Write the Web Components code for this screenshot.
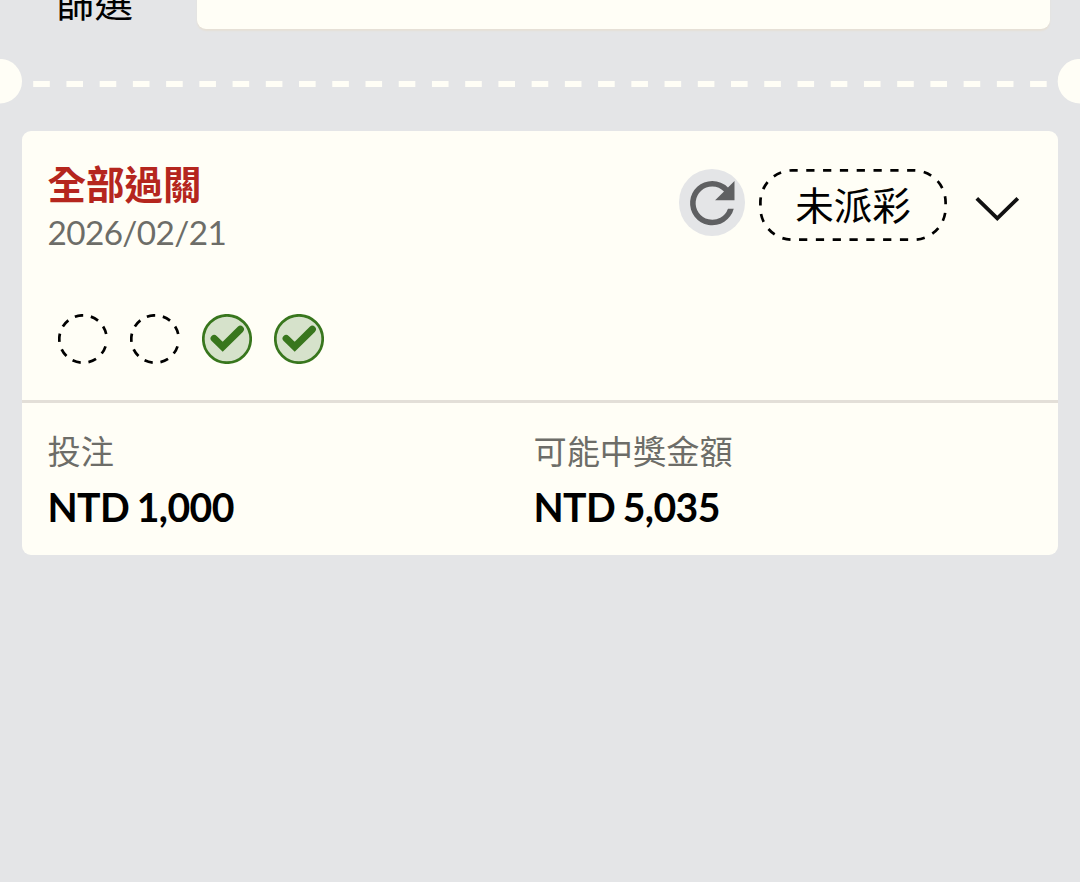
<!DOCTYPE html>
<html lang="zh-Hant">
<head>
<meta charset="utf-8">
<title>投注紀錄</title>
<style>
    :root {
        --paper: #fffef6;
        --ground: #e4e5e7;
        --muted: #6d6d68;
        --red: #b5261e;
        --green: #38761d;
    }
    body {
        margin: 0;
        height: 882px;
        overflow: hidden;
        background: var(--ground);
        color: #000;
        font-family: Lato, "Noto Sans CJK TC", sans-serif;
    }
</style>
</head>
<body>
<filter-bar>篩選</filter-bar>
<ticket-divider></ticket-divider>
<bet-card>
    <span slot="title">全部過關</span>
    <span slot="date">2026/02/21</span>
    <refresh-button slot="actions"></refresh-button>
    <status-pill slot="actions">未派彩</status-pill>
    <expand-arrow slot="actions"></expand-arrow>
    <leg-mark slot="legs"></leg-mark>
    <leg-mark slot="legs"></leg-mark>
    <leg-mark slot="legs" won></leg-mark>
    <leg-mark slot="legs" won></leg-mark>
    <amount-field slot="amounts" label="投注">NTD 1,000</amount-field>
    <amount-field slot="amounts" label="可能中獎金額">NTD 5,035</amount-field>
</bet-card>

<script>
class FilterBar extends HTMLElement {
    constructor() {
        super();
        this.attachShadow({mode: 'open'});
        // The bar is scrolled partly out of view, so it starts above the page
        this.shadowRoot.innerHTML = `
            <style>
                :host {
                    display: flex;
                    align-items: flex-end;
                    height: 77px;
                    margin-top: -48.5px;
                    padding: 0 30px 0 56px;
                }
                .label {
                    width: 140.5px;
                    font-size: 38.5px;
                    line-height: 53px;
                }
                .field {
                    flex: 1;
                    height: 77px;
                    border-radius: 9px;
                    background: var(--paper);
                    box-shadow: 0 1.5px 1.5px #e6e0d6;
                }
            </style>
            <div class="label"><slot></slot></div>
            <div class="field"></div>
        `;
    }
}

class TicketDivider extends HTMLElement {
    constructor() {
        super();
        this.attachShadow({mode: 'open'});
        this.shadowRoot.innerHTML = `
            <style>
                :host {
                    display: block;
                    padding: 30.5px 0 27.5px;
                }
                svg {
                    display: block;
                    width: 1080px;
                    height: 44.5px;
                }
            </style>
            <svg viewBox="0 0 1080 44.5">
                <circle cx="-.3" cy="22.2" r="22.3" fill="#fffef6"/>
                <circle cx="1080" cy="22.2" r="22.3" fill="#fffef6"/>
                <path d="M33.2 25H1048" stroke="#fffef6" stroke-width="6" stroke-dasharray="16.6 16.63"/>
            </svg>
        `;
    }
}

class BetCard extends HTMLElement {
    constructor() {
        super();
        this.attachShadow({mode: 'open'});
        this.shadowRoot.innerHTML = `
            <style>
                :host {
                    display: block;
                    margin: 0 22px;
                    border-radius: 9px;
                    background: var(--paper);
                }
                header {
                    display: flex;
                    justify-content: space-between;
                    box-sizing: border-box;
                    height: 183px;
                    padding: 30px 37px 0 25.5px;
                }
                .title {
                    color: var(--red);
                    font-size: 38.5px;
                    font-weight: 700;
                    line-height: 46px;
                }
                .date {
                    color: var(--muted);
                    font-size: 33.3px;
                    letter-spacing: -.6px;
                    line-height: 50px;
                }
                .actions {
                    display: flex;
                    align-items: center;
                    height: 88px;
                }
                .legs {
                    display: flex;
                    gap: 22px;
                    height: 86px;
                    padding-left: 36px;
                }
                footer {
                    display: grid;
                    grid-template-columns: 486px 1fr;
                    box-sizing: border-box;
                    height: 155px;
                    padding: 25px 26px 0 25.5px;
                    border-top: 3px solid #e3dfd8;
                }
            </style>
            <header>
                <div>
                    <div class="title"><slot name="title"></slot></div>
                    <div class="date"><slot name="date"></slot></div>
                </div>
                <div class="actions"><slot name="actions"></slot></div>
            </header>
            <div class="legs"><slot name="legs"></slot></div>
            <footer><slot name="amounts"></slot></footer>
        `;
    }
}

class RefreshButton extends HTMLElement {
    constructor() {
        super();
        this.attachShadow({mode: 'open'});
        this.shadowRoot.innerHTML = `
            <style>
                :host {
                    display: block;
                    width: 66.6px;
                    height: 66.6px;
                    margin: -5.5px 13.9px 0 0;
                    border-radius: 50%;
                    background: #e4e5e7;
                }
                svg { display: block; }
            </style>
            <svg width="66.6" height="66.6" viewBox="0 -.3 24 24" fill="#5f6062">
                <path d="M17.65 6.35A7.96 7.96 0 0 0 12 4a8 8 0 1 0 7.73 10h-2.08A6 6 0 1 1 12 6c1.66 0 3.14.69 4.22 1.78L13 11h7V4z"/>
            </svg>
        `;
    }
}

class StatusPill extends HTMLElement {
    constructor() {
        super();
        this.attachShadow({mode: 'open'});
        this.shadowRoot.innerHTML = `
            <style>
                :host {
                    position: relative;
                    display: flex;
                    align-items: center;
                    justify-content: center;
                    width: 188px;
                    height: 72px;
                    font-size: 38.5px;
                    line-height: 72px;
                }
                svg {
                    position: absolute;
                    inset: 0;
                }
            </style>
            <svg width="188" height="72" viewBox="0 0 188 72" fill="none" stroke="#000" stroke-width="2.7">
                <path pathLength="27" stroke-dasharray=".49 .51" stroke-dashoffset=".17"
                    d="M33.3 1.4H154.7A31.9 31.9 0 0 1 186.6 33.3V38.8A31.9 31.9 0 0 1 154.7 70.7H33.3A31.9 31.9 0 0 1 1.4 38.8V33.3A31.9 31.9 0 0 1 33.3 1.4z"/>
            </svg>
            <slot></slot>
        `;
    }
}

class ExpandArrow extends HTMLElement {
    constructor() {
        super();
        this.attachShadow({mode: 'open'});
        this.shadowRoot.innerHTML = `
            <style>
                :host {
                    display: block;
                    margin: 7px 0 0 28px;
                }
                svg { display: block; }
            </style>
            <svg width="46" height="26" viewBox="0 0 46 26" fill="none" stroke="#111" stroke-width="3.8">
                <path d="M1.8 2.4L22.3 22.4L42.8 2.4"/>
            </svg>
        `;
    }
}

class LegMark extends HTMLElement {
    constructor() {
        super();
        this.attachShadow({mode: 'open'});
    }

    connectedCallback() {
        // Pending legs get a dashed ring, won ones a tick
        const pending = `<path pathLength="330" stroke="#000" stroke-dasharray="20 18.75"
            d="M47.54 32.32A23.7 23.7 0 1 1 48.18 20.07"/>`;
        const won = `<circle cx="25" cy="25" r="23.7" fill="#d6e2cb" stroke="#38761d"/>
            <path d="M12.2 24.5L20.7 32.8L38.3 15.4" stroke="#38761d" stroke-width="7.2" stroke-linecap="round"/>`;
        this.shadowRoot.innerHTML = `
            <style>
                :host { display: block; }
                svg { display: block; }
            </style>
            <svg width="50" height="50" viewBox="0 0 50 50" fill="none" stroke-width="2.7">
                ${this.hasAttribute('won') ? won : pending}
            </svg>
        `;
    }
}

class AmountField extends HTMLElement {
    constructor() {
        super();
        this.attachShadow({mode: 'open'});
        this.shadowRoot.innerHTML = `
            <style>
                :host { display: block; }
                .label {
                    color: var(--muted);
                    font-size: 33.2px;
                    line-height: 46px;
                }
                .value {
                    font-size: 39.2px;
                    font-weight: 700;
                    letter-spacing: -.6px;
                    word-spacing: -1.4px;
                    line-height: 66px;
                }
            </style>
            <div class="label"></div>
            <div class="value"><slot></slot></div>
        `;
    }

    connectedCallback() {
        this.shadowRoot.querySelector('.label').textContent = this.getAttribute('label');
    }
}

customElements.define('filter-bar', FilterBar);
customElements.define('ticket-divider', TicketDivider);
customElements.define('bet-card', BetCard);
customElements.define('refresh-button', RefreshButton);
customElements.define('status-pill', StatusPill);
customElements.define('expand-arrow', ExpandArrow);
customElements.define('leg-mark', LegMark);
customElements.define('amount-field', AmountField);
</script>
</body>
</html>
